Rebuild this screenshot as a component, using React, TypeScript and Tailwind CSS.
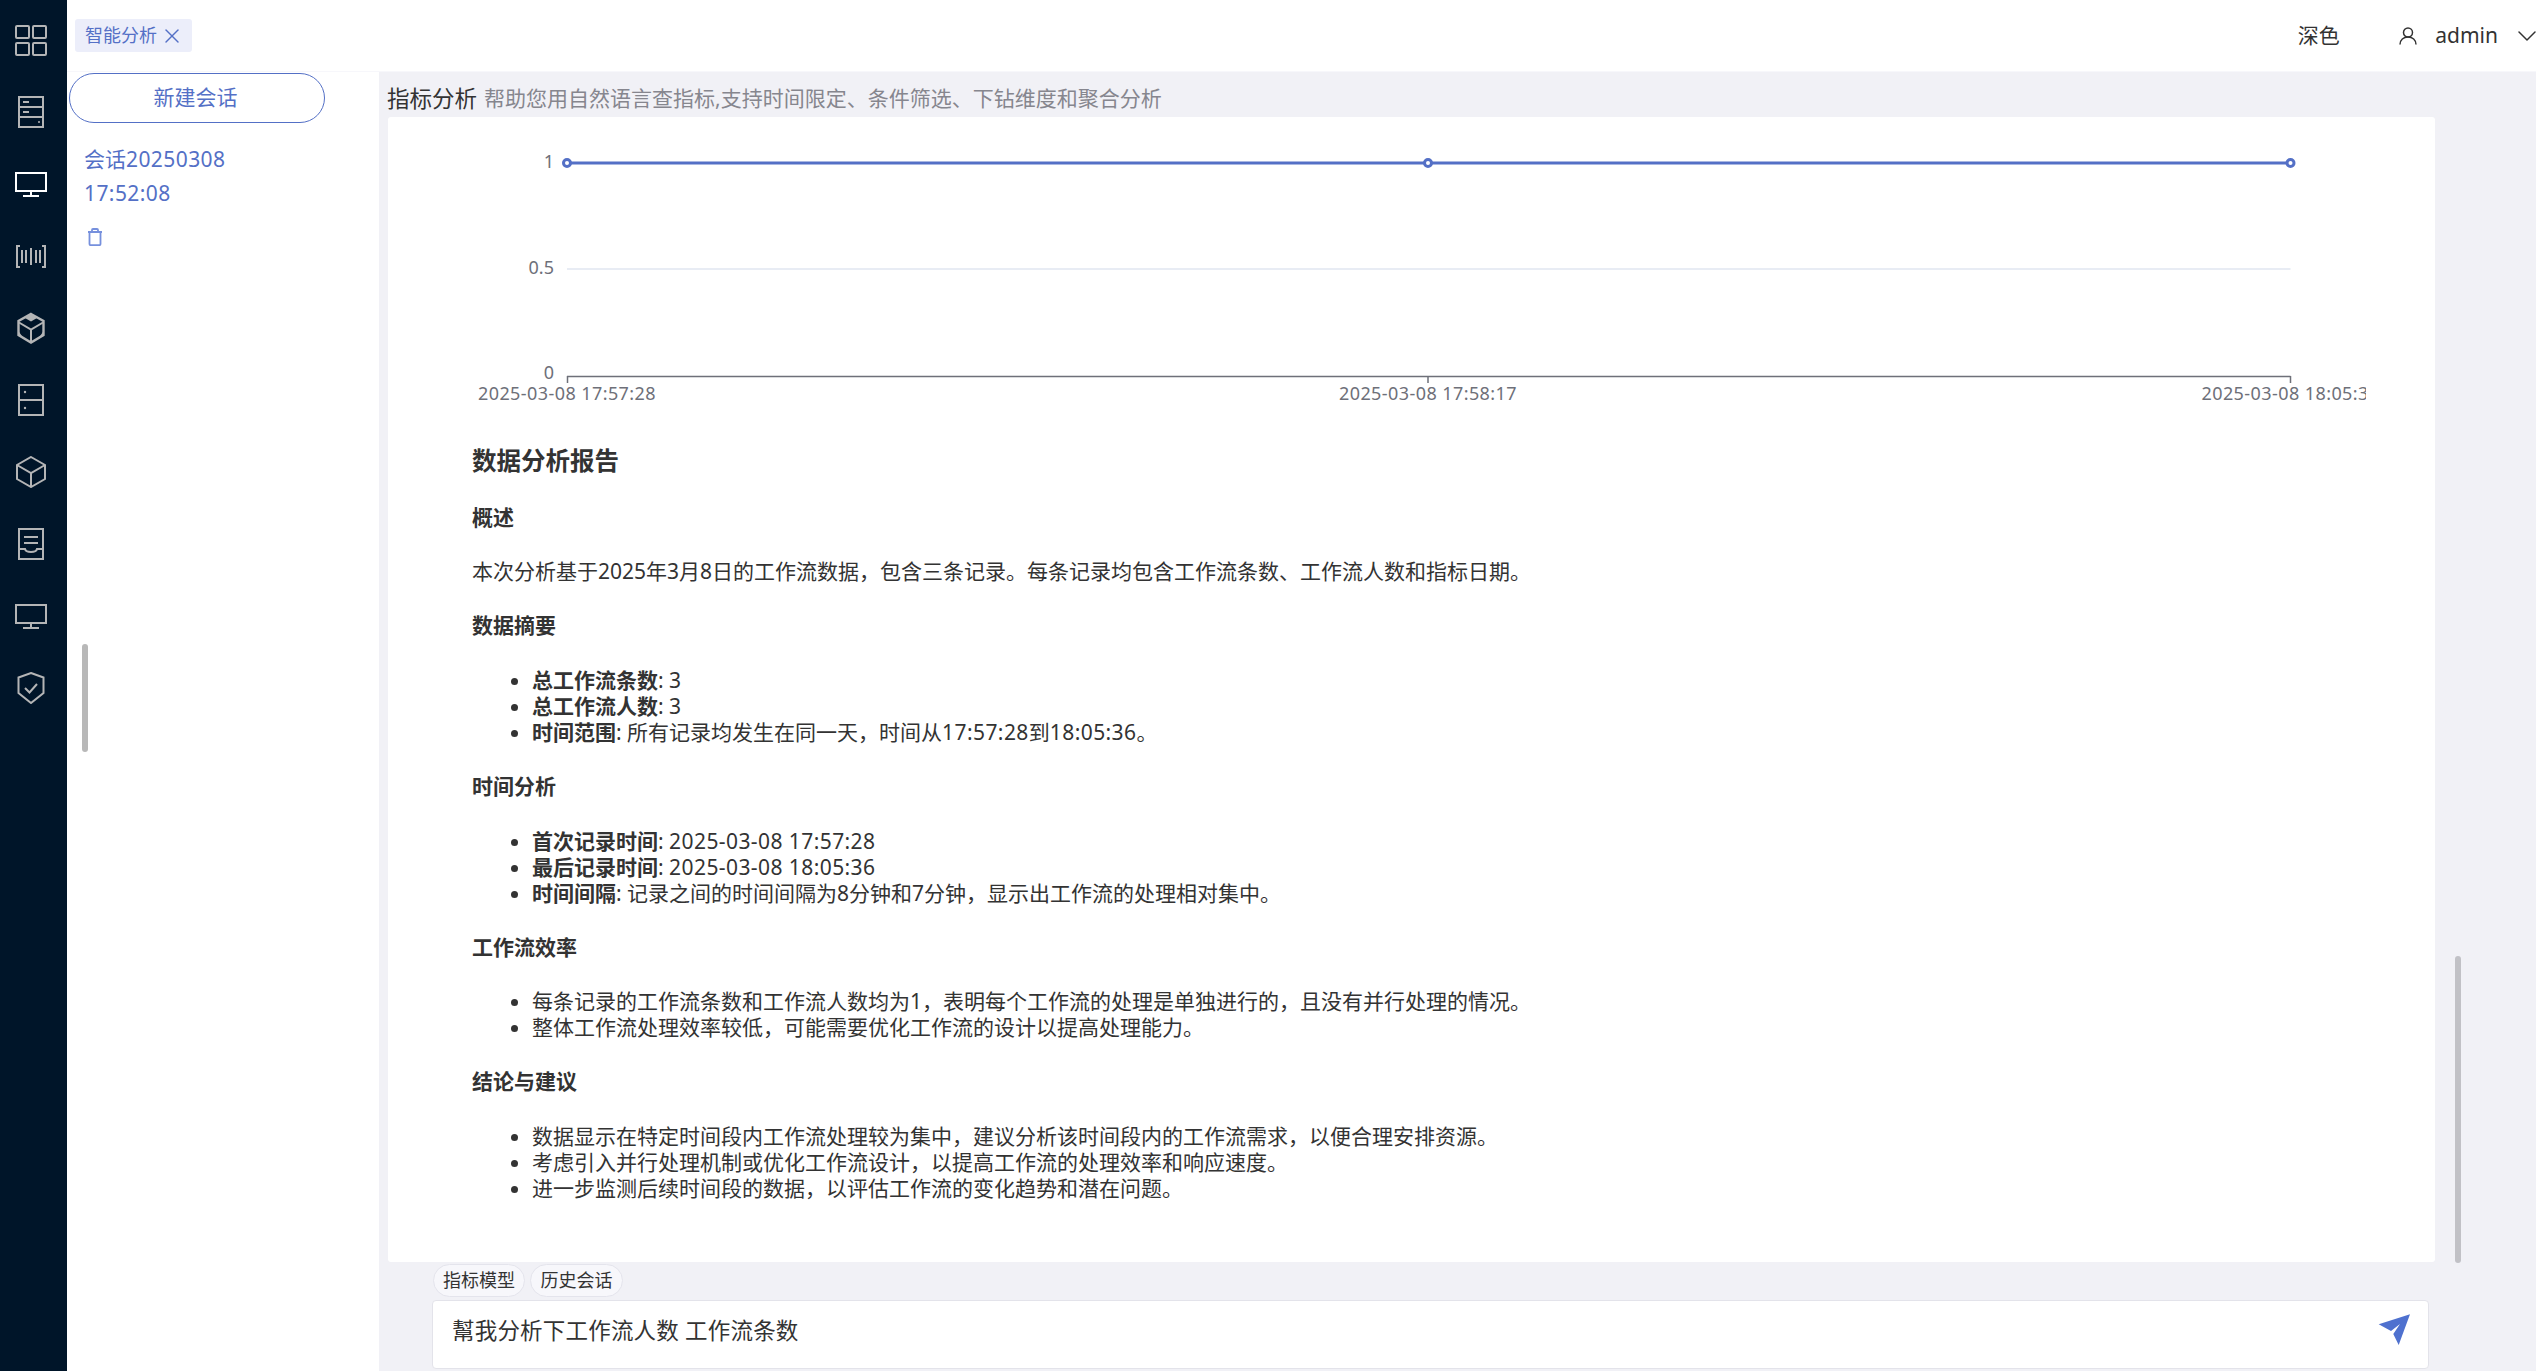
import { X, ChevronDown } from "lucide-react"

const gray = "#b4b5b6"

function NavIcon({ children, color = gray }: { children: React.ReactNode; color?: string }) {
  return (
    <div className="flex h-[72px] items-center justify-center pr-[5px]">
      <svg width="32" height="32" viewBox="0 0 32 32" fill="none" stroke={color} strokeWidth="2">
        {children}
      </svg>
    </div>
  )
}

const Monitor = () => (
  <>
    <rect x="1" y="5" width="30" height="18" />
    <path d="M16 23v5M8 28h16" />
  </>
)

// digits run a little wider in the original font
const Num = ({ children }: { children: React.ReactNode }) => <span className="tracking-[0.42px]">{children}</span>

function Chart() {
  return (
    <svg width="1894" height="328" viewBox="0 0 1894 328" className="block">
      <g fontSize="18" fill="#6e7079" fontFamily="'Noto Sans', sans-serif">
        <text x="82" y="51" textAnchor="end">1</text>
        <text x="82" y="157" textAnchor="end">0.5</text>
        <text x="82" y="262" textAnchor="end">0</text>
        <text x="95" y="283" textAnchor="middle" letterSpacing="0.42">2025-03-08 17:57:28</text>
        <text x="956" y="283" textAnchor="middle" letterSpacing="0.42">2025-03-08 17:58:17</text>
        <text x="1818.5" y="283" textAnchor="middle" letterSpacing="0.42">2025-03-08 18:05:36</text>
      </g>
      <path d="M95 152H1818.5" stroke="#e0e6f1" strokeWidth="1.5" />
      <path d="M95 259.5H1818.5M95.5 259v7M956 259v7M1818.5 259v7" stroke="#6e7079" strokeWidth="1.5" fill="none" />
      <path d="M95 46H1818.5" stroke="#5470c6" strokeWidth="3" />
      <g fill="#fff" stroke="#5470c6" strokeWidth="3">
        <circle cx="95" cy="46" r="3.5" />
        <circle cx="956" cy="46" r="3.5" />
        <circle cx="1818.5" cy="46" r="3.5" />
      </g>
    </svg>
  )
}

const h4 = "text-[21px] font-bold leading-[26.2px] mb-[28.2px]"
const ul = "list-disc pl-[60px] mb-[27.7px] text-[21px] leading-[26.2px]"

export default function App() {
  return (
    <div className="flex h-screen w-screen overflow-hidden bg-white font-['Noto_Sans','Noto_Sans_CJK_SC',sans-serif] text-[#333]">
      <aside className="flex w-[67px] shrink-0 flex-col bg-[#001529] pt-1">
        <NavIcon>
          <rect x="1" y="2" width="13" height="12" rx="1" />
          <rect x="18" y="2" width="13" height="12" rx="1" />
          <rect x="1" y="19" width="13" height="12" rx="1" />
          <rect x="18" y="19" width="13" height="12" rx="1" />
        </NavIcon>
        <NavIcon>
          <rect x="4" y="1" width="24" height="30" />
          <path d="M4 11h24M4 21h24M8 6h6M8 16h6" />
          <circle cx="24" cy="26" r="1" fill={gray} stroke="none" />
        </NavIcon>
        <NavIcon color="#ffffff">
          <Monitor />
        </NavIcon>
        <NavIcon>
          <path d="M5 6H2v21h3M27 6h3v21h-3M7 10v13M11 10v13M16 8v17M21 10v13M25 10v13" />
        </NavIcon>
        <NavIcon>
          <path d="M16 2 28.5 9v14L16 30.5 3.5 23V9Z" strokeWidth="2.4" />
          <path d="M4 10.5l12 7 12-7M16 17.5v12.5" />
          <path d="M16 2.5 10 6l6 3.5L22 6Z" fill={gray} stroke="none" />
          <path d="M3.5 19l5 7.5-5-2.5ZM28.5 19l-5 7.5 5-2.5Z" fill={gray} stroke="none" />
        </NavIcon>
        <NavIcon>
          <rect x="4" y="1" width="24" height="30" />
          <path d="M4 16h24" />
          <circle cx="10" cy="8" r="1.2" fill={gray} stroke="none" />
          <circle cx="10" cy="24" r="1.2" fill={gray} stroke="none" />
        </NavIcon>
        <NavIcon>
          <path d="M16 1 30 9v14l-14 8-14-8V9Z" />
          <path d="M2 9l14 8 14-8M16 17v14" />
        </NavIcon>
        <NavIcon>
          <rect x="4" y="1" width="24" height="30" />
          <path d="M9 9h14M9 15h14M4 21h6c1 4 11 4 12 0h6" />
        </NavIcon>
        <NavIcon>
          <Monitor />
        </NavIcon>
        <NavIcon>
          <path d="M16 1 28.5 5.5V21L16 31 3.5 21V5.5Z" />
          <path d="M10 16l4.5 4.5L22 12" />
        </NavIcon>
      </aside>

      <div className="flex min-w-0 flex-1 flex-col">
        <header className="flex h-[72px] shrink-0 items-center border-b border-[#f7f7fb] pl-2">
          <div className="flex h-[33px] w-[117px] items-center rounded-[3px] bg-[#eceefa] pl-[10px] text-[18px] text-[#5470c6]">
            智能分析
            <X size={24} strokeWidth={1.4} className="ml-[3px]" />
          </div>
          <div className="ml-auto flex items-center text-[21px]">
            <span>深色</span>
            <svg width="18" height="18" viewBox="0 0 18 18" fill="none" stroke="#333" strokeWidth="1.5" className="ml-[59px]">
              <circle cx="9" cy="5.5" r="4.5" />
              <path d="M1 17.5c0-4.5 3.5-7.5 8-7.5s8 3 8 7.5" />
            </svg>
            <span className="ml-[18.5px]">admin</span>
            <ChevronDown size={32} strokeWidth={1.1} className="ml-[13px] mr-[-7px]" />
          </div>
        </header>

        <div className="flex min-h-0 flex-1">
          <div className="relative w-[312px] shrink-0 bg-white">
            <button className="ml-[2px] mt-px block h-[50px] w-[256px] rounded-full border-[1.5px] border-[#5470c6] pr-[3px] text-[21px] text-[#5470c6]">
              新建会话
            </button>
            <div className="ml-[17px] mt-[19px] w-[190px] text-[21px] leading-[34px] text-[#5470c6]">
              会话<Num>20250308</Num> <Num>17:52:08</Num>
            </div>
            <svg width="16" height="18" viewBox="0 0 16 18" fill="none" stroke="#7690dd" strokeWidth="1.8" className="ml-[20px] mt-[18px]">
              <path d="M1 4h14M2.5 4v12c0 .8.5 1.2 1.2 1.2h8.6c.7 0 1.2-.4 1.2-1.2V4M5 4V2c0-.6.4-1 1-1h4c.6 0 1 .4 1 1v2" />
            </svg>
            <div className="absolute left-[15px] top-[572px] h-[108px] w-[6px] rounded-full bg-[#b8b8b8]" />
          </div>

          <main className="relative flex min-w-0 flex-1 flex-col bg-[#f1f1f6] pl-[9px]">
            <div className="-ml-px flex h-[45px] shrink-0 items-center pt-[8px]">
              <span className="text-[22.5px]">指标分析</span>
              <span className="ml-[7px] text-[21px] text-[#86868e]">帮助您用自然语言查指标,支持时间限定、条件筛选、下钻维度和聚合分析</span>
            </div>

            <div className="h-[1145px] w-[2047px] shrink-0 overflow-hidden rounded-[3px] bg-white pl-[84px]">
              <Chart />
              <h3 className="mb-[27px] text-[24.5px] font-bold leading-[32px]">数据分析报告</h3>
              <h4 className={h4}>概述</h4>
              <p className="mb-[27.9px] text-[21px] leading-[26.2px]">本次分析基于2025年3月8日的工作流数据，包含三条记录。每条记录均包含工作流条数、工作流人数和指标日期。</p>
              <h4 className={h4}>数据摘要</h4>
              <ul className={ul}>
                <li><b>总工作流条数</b>: 3</li>
                <li><b>总工作流人数</b>: 3</li>
                <li><b>时间范围</b>: 所有记录均发生在同一天，时间从<Num>17:57:28</Num>到<Num>18:05:36</Num>。</li>
              </ul>
              <h4 className={h4}>时间分析</h4>
              <ul className={ul}>
                <li><b>首次记录时间</b>: <Num>2025-03-08 17:57:28</Num></li>
                <li><b>最后记录时间</b>: <Num>2025-03-08 18:05:36</Num></li>
                <li><b>时间间隔</b>: 记录之间的时间间隔为8分钟和7分钟，显示出工作流的处理相对集中。</li>
              </ul>
              <h4 className={h4}>工作流效率</h4>
              <ul className={ul}>
                <li>每条记录的工作流条数和工作流人数均为1，表明每个工作流的处理是单独进行的，且没有并行处理的情况。</li>
                <li>整体工作流处理效率较低，可能需要优化工作流的设计以提高处理能力。</li>
              </ul>
              <h4 className={h4}>结论与建议</h4>
              <ul className={ul}>
                <li>数据显示在特定时间段内工作流处理较为集中，建议分析该时间段内的工作流需求，以便合理安排资源。</li>
                <li>考虑引入并行处理机制或优化工作流设计，以提高工作流的处理效率和响应速度。</li>
                <li>进一步监测后续时间段的数据，以评估工作流的变化趋势和潜在问题。</li>
              </ul>
            </div>

            <div className="ml-[45px] mt-[2px] flex gap-[5px]">
              <span className="flex h-[33px] w-[92px] items-center justify-center rounded-full border border-[#e4e4ec] bg-[#f7f7fb] text-[18px]">指标模型</span>
              <span className="flex h-[33px] w-[93px] items-center justify-center rounded-full border border-[#e4e4ec] bg-[#f7f7fb] text-[18px]">历史会话</span>
            </div>

            <div className="ml-[44px] mt-[3px] flex h-[69px] w-[1997px] items-start justify-between rounded-[4px] border-[1.5px] border-[#e3e3ea] bg-white pl-[19px] pr-[18px] pt-[13px] text-[22.5px]">
              <span className="pt-px leading-[32px] tracking-[0.2px]">幫我分析下工作流人数 工作流条数</span>
              <svg width="32" height="32" viewBox="0 0 32 32" fill="#4f71cf">
                <path d="M32 .3.7 10.3 13 17 22 10 15.3 20 20.7 31Z" />
              </svg>
            </div>

            <div className="absolute left-[2076px] top-[884px] h-[307px] w-[6px] rounded-full bg-[#c1c1c6]" />
          </main>
        </div>
      </div>
    </div>
  )
}
